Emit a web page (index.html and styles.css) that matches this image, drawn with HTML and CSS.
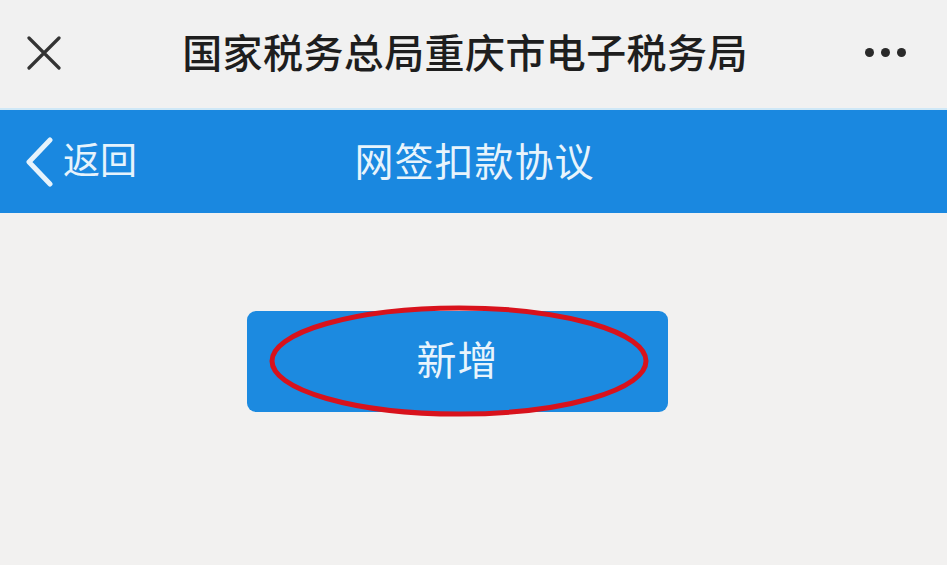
FILE: index.html
```html
<!DOCTYPE html>
<html lang="zh-CN">
<head>
<meta charset="utf-8">
<title>网签扣款协议</title>
<link rel="stylesheet" href="styles.css">
</head>
<body>
<div class="app">
  <header class="topbar">
    <span class="close-icon">
      <svg width="34" height="34" viewBox="0 0 34 34"><path d="M2 2 L32 32 M32 2 L2 32" stroke="#333" stroke-width="3.2" stroke-linecap="round" fill="none"/></svg>
    </span>
    <h1 class="top-title">国家税务总局重庆市电子税务局</h1>
    <span class="more-icon"><i></i><i></i><i></i></span>
  </header>
  <nav class="navbar">
    <a class="back">
      <svg width="30" height="50" viewBox="0 0 30 50"><path d="M26 3 L5 25 L26 47" stroke="#e6f3fc" stroke-width="5" stroke-linecap="round" stroke-linejoin="round" fill="none"/></svg>
      <span>返回</span>
    </a>
    <div class="nav-title">网签扣款协议</div>
  </nav>
  <main class="content">
    <div class="btn-wrap">
      <button class="add-btn">新增</button>
      <svg class="mark" width="382" height="114" viewBox="0 0 382 114"><ellipse cx="191" cy="57" rx="187" ry="53" stroke="#d8121c" stroke-width="5" fill="none"/></svg>
    </div>
  </main>
</div>
</body>
</html>
```
FILE: styles.css
```css
* { box-sizing: border-box; margin: 0; padding: 0; }
html, body { width: 947px; height: 565px; overflow: hidden; }
body { background: #f2f1f0; font-family: "Noto Sans CJK SC", "Noto Sans", sans-serif; }
.app { display: flex; flex-direction: column; height: 565px; }
.topbar {
  height: 108px; background: #f1f1f1; display: flex; align-items: center;
  position: relative; padding: 0 27px;
}
.close-icon { display: flex; width: 34px; height: 34px; margin-top: -2px; }
.top-title {
  flex: 1; text-align: center; font-size: 40px; font-weight: 500; color: #1e1e1e;
  letter-spacing: 0.4px; margin-left: 4px; margin-top: -6px;
}
.more-icon { display: flex; gap: 7px; margin-right: 14px; margin-top: -4px; }
.more-icon i { width: 9px; height: 9px; border-radius: 50%; background: #2a2a2a; display: block; }
.navbar {
  height: 105px; background: #1a88e0; border-top: 2px solid #cfe8f7;
  display: flex; align-items: center; position: relative; padding-left: 24px;
}
.back { display: flex; align-items: center; gap: 9px; color: #e6f3fc; font-size: 37px; }
.back span { margin-top: -8px; }
.nav-title {
  position: absolute; left: 0; right: 0; text-align: center; color: #e8f4fc;
  font-size: 39px; top: 21px; pointer-events: none; letter-spacing: 1px; padding-left: 2px;
}
.content { flex: 1; display: flex; justify-content: center; padding-top: 98px; padding-right: 32px; }
.btn-wrap { position: relative; width: 421px; height: 101px; }
.add-btn {
  width: 421px; height: 101px; border: none; border-radius: 9px; background: #1c8ae0;
  color: #e8f4fc; font-family: inherit; font-size: 40px; letter-spacing: 1px;
  padding-bottom: 8px;
}
.mark { position: absolute; left: 21px; top: -7px; pointer-events: none; }
```
